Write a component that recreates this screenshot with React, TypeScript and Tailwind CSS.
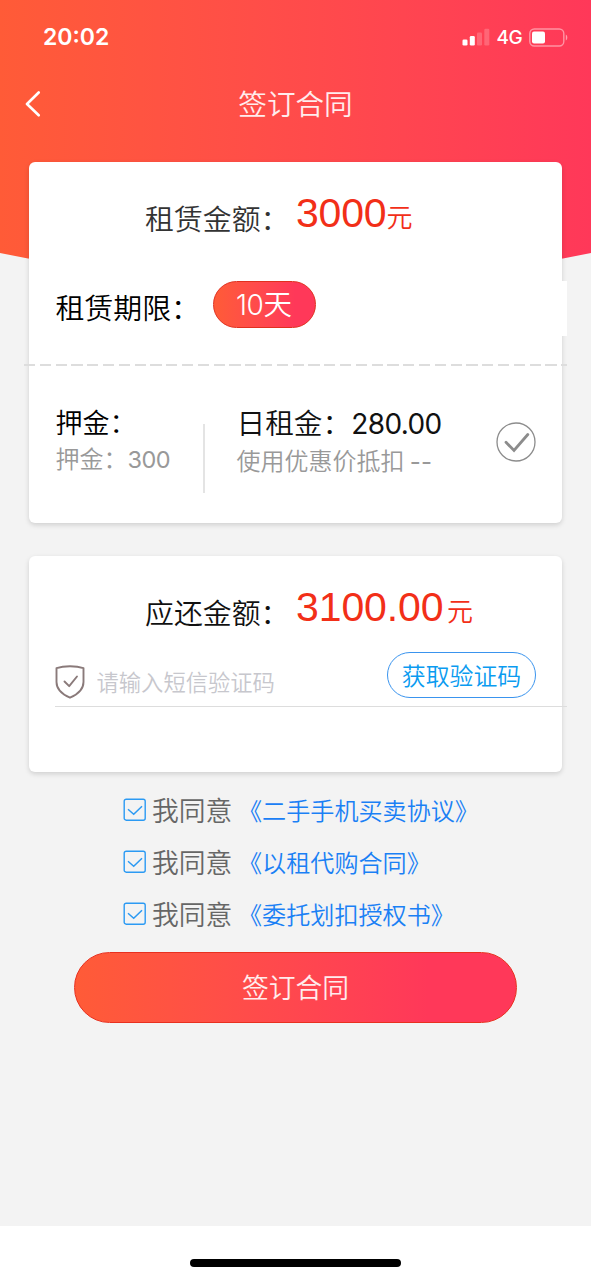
import { useState } from 'react'
import type { ReactNode } from 'react'

const agreements = ['《二手手机买卖协议》', '《以租代购合同》', '《委托划扣授权书》']

function Num({ children, className = '' }: { children: ReactNode; className?: string }) {
  return <span className={`font-['Inter',sans-serif] ${className}`}>{children}</span>
}

function StatusBar() {
  return (
    <div className="flex h-[74px] items-center justify-between pr-[23px] pl-[43px] text-white">
      <Num className="text-[23px] leading-none font-semibold">20:02</Num>
      <div className="flex items-center">
        <svg width="28" height="18" viewBox="0 0 28 18" fill="#fff">
          <rect x="0.5" y="11.5" width="5" height="6" rx="1.3" />
          <rect x="7.8" y="8" width="5" height="9.5" rx="1.3" />
          <rect x="15" y="4.5" width="5" height="13" rx="1.3" opacity="0.2" />
          <rect x="22.3" y="0.7" width="5" height="16.8" rx="1.3" opacity="0.2" />
        </svg>
        <Num className="mt-px ml-[7px] text-[19px] leading-none font-medium tracking-[-0.6px]">4G</Num>
        <svg className="ml-[7px]" width="39" height="19" viewBox="0 0 39 19" fill="none">
          <rect x="0.8" y="1" width="34" height="17" rx="4.5" stroke="#fff" strokeOpacity="0.45" strokeWidth="1.4" />
          <rect x="3" y="3.5" width="13" height="12" rx="2" fill="#fff" />
          <path d="M36.8 6.5c2 1 2 5 0 6z" fill="#fff" fillOpacity="0.5" />
        </svg>
      </div>
    </div>
  )
}

function Checkbox() {
  return (
    <svg width="24" height="24" viewBox="0 0 24 24" fill="none" stroke="#2b9af3">
      <rect x="1.2" y="1.2" width="21" height="21" rx="2" strokeWidth="1.4" />
      <path d="M5 11.3l5.7 5L19 8.2" strokeWidth="1.5" />
    </svg>
  )
}

export default function App() {
  const [code, setCode] = useState('')

  return (
    <div className="w-[592px] bg-white">
      <div
        lang="zh-CN"
        className="relative flex h-[1280px] w-[591px] flex-col bg-[#f3f3f3] font-['Noto_Sans_CJK_SC',sans-serif] font-[350]"
      >
        <div className="absolute inset-x-0 top-0 h-[300px] bg-linear-to-r from-[#ff5b37] to-[#ff3859] [clip-path:polygon(0_0,100%_0,100%_253px,563px_258.5px,50%_290px,28px_258.5px,0_253px)]" />

        <header className="relative h-[162px]">
          <StatusBar />
          <div className="flex h-[58px] items-center px-[24px] text-white">
            <svg width="18" height="28" viewBox="0 0 18 28" fill="none" stroke="#fff" strokeWidth="2.6" strokeLinecap="round" strokeLinejoin="round">
              <path d="M14.7 3.5L3 15l11.7 11.3" />
            </svg>
            <h1 className="flex-1 pr-[18px] text-center text-[28.6px] leading-none text-white/90">签订合同</h1>
          </div>
        </header>

        <section className="relative mr-[29px] ml-[28.5px] h-[360.5px] rounded-[6px] bg-white pt-[31px] shadow-[0_2px_5px_rgba(0,0,0,0.15)]">
          <div className="flex h-[88px] items-start pl-[116.5px] leading-[40px]">
            <span className="mt-[4px] w-[151px] text-[28.9px] text-[#333]">租赁金额：</span>
            <span className="font-['Liberation_Sans',sans-serif] text-[41px] font-normal tracking-[-0.2px] text-[#f22f18]">3000</span>
            <span className="mt-[3px] text-[26px] text-[#f22f18]">元</span>
          </div>

          <div className="ml-[27px] flex h-[55px] w-[511.5px] items-start bg-white leading-[40px]">
            <span className="mt-[5px] w-[157px] text-[28.9px] text-black">租赁期限：</span>
            <button className="flex h-[47px] w-[103px] items-baseline justify-center rounded-full border border-[#e0301f] bg-linear-to-r from-[#ff5b37] to-[#ff3859] to-80% pt-px text-[28.5px] text-white">
              <Num className="text-[28px] tracking-[-0.3px]">10</Num>天
            </button>
          </div>

          <div className="mt-[28px] -ml-[4.5px] h-[2px] w-[543px] bg-[repeating-linear-gradient(to_right,#ddd_0,#ddd_11.2px,transparent_11.2px,transparent_15.8px)]" />

          <div className="flex items-start pl-[27px]">
            <div className="w-[147px] pt-[36px]">
              <p className="text-[27px] leading-[40px] text-black">押金：</p>
              <p className="mt-[-2px] flex items-baseline text-[24px] leading-[36px] text-[#999]">
                押金：<Num className="text-[23.5px] font-normal tracking-[-0.5px]">300</Num>
              </p>
            </div>
            <div className="mt-[58px] h-[69px] w-[2px] bg-[#e4e4e4]" />
            <div className="ml-[32px] w-[259px] pt-[36px]">
              <p className="flex items-baseline text-[28.7px] leading-[40px] text-[#111]">
                日租金：<Num className="text-[28px] font-normal tracking-[-0.6px]">280.00</Num>
              </p>
              <p className="mt-[-2px] text-[24px] leading-[36px] text-[#999]">
                使用优惠价抵扣 <Num className="font-normal">--</Num>
              </p>
            </div>
            <svg className="mt-[56px]" width="40" height="40" viewBox="0 0 40 40" fill="none" stroke="#8c8c8c">
              <circle cx="20" cy="20" r="19" strokeWidth="1.3" />
              <path d="M10 20.3l8 8.2L31.8 12.5" strokeWidth="2.8" strokeLinecap="round" />
            </svg>
          </div>
        </section>

        <section className="relative mt-[33px] mr-[29px] ml-[28.5px] h-[216px] rounded-[6px] bg-white pt-[31px] shadow-[0_2px_5px_rgba(0,0,0,0.15)]">
          <div className="flex h-[65px] items-start pl-[116.5px] leading-[40px]">
            <span className="mt-[4px] w-[151px] text-[28.9px] text-[#111]">应还金额：</span>
            <span className="font-['Liberation_Sans',sans-serif] text-[41px] font-normal tracking-[-0.1px] text-[#f22f18]">3100.00</span>
            <span className="mt-[3px] ml-[3.5px] text-[26px] text-[#f22f18]">元</span>
          </div>
          <div className="ml-[26px] flex h-[55px] w-[512.5px] items-start border-b border-[#ddd]">
            <svg className="mt-[13.5px]" width="30" height="34" viewBox="0 0 30 34" fill="none" stroke="#8a7a7a" strokeWidth="1.9" strokeLinecap="round" strokeLinejoin="round">
              <path d="M1.5 3.2C9 0.6 21 0.6 28.500 3.200V17c0 8-6 12.500-13.500 15.700C7.500 29.500 1.500 25 1.500 17z" />
              <path d="M9.500 16.500l4.700 4.700L22 11.500" />
            </svg>
            <input
              value={code}
              onChange={(e) => setCode(e.target.value)}
              placeholder="请输入短信验证码"
              className="mt-[10px] ml-[12px] h-[38px] w-[290.5px] text-[22.3px] leading-[38px] outline-none placeholder:text-[#c7c7cd]"
            />
            <button className="h-[46px] w-[149px] rounded-full border-[1.5px] border-[#3a94ee] text-[23.9px] leading-[40px] text-[#0a9bf0]">
              获取验证码
            </button>
          </div>
        </section>

        <ul className="mt-[12.5px] pl-[122.5px]">
          {agreements.map((name) => (
            <li key={name} className="flex h-[52px] items-center">
              <Checkbox />
              <span className="ml-[5.5px] w-[86px] text-[26.8px] leading-[40px] text-[#666]">我同意</span>
              <a className="pb-px text-[24.1px] leading-[40px] text-[#1a80f5]">{name}</a>
            </li>
          ))}
        </ul>

        <button className="mt-[12px] ml-[74px] h-[71px] w-[443px] shrink-0 rounded-full border border-[#e8301f] bg-linear-to-r from-[#ff5b37] to-[#ff3859] to-80% text-[26.8px] text-white/90">
          签订合同
        </button>

        <footer className="mt-auto flex h-[54px] justify-center bg-white pt-[33px]">
          <div className="h-[8px] w-[211px] rounded-full bg-black" />
        </footer>
      </div>
    </div>
  )
}
